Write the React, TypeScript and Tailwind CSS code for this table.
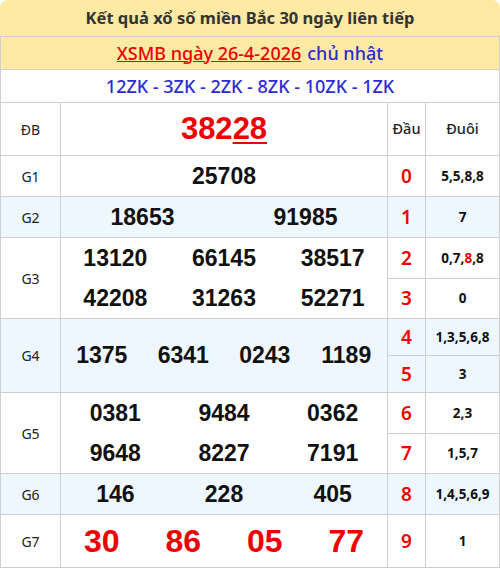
import React from "react";

type Prize = {
  label: string;
  nums: string[][];
  big?: boolean;
  blue?: boolean;
  rows: number;
};

const prizes: Prize[] = [
  { label: "G1", nums: [["25708"]], rows: 1 },
  { label: "G2", nums: [["18653", "91985"]], blue: true, rows: 1 },
  { label: "G3", nums: [["13120", "66145", "38517"], ["42208", "31263", "52271"]], rows: 2 },
  { label: "G4", nums: [["1375", "6341", "0243", "1189"]], blue: true, rows: 2 },
  { label: "G5", nums: [["0381", "9484", "0362"], ["9648", "8227", "7191"]], rows: 2 },
  { label: "G6", nums: [["146", "228", "405"]], blue: true, rows: 1 },
  { label: "G7", nums: [["30", "86", "05", "77"]], big: true, rows: 1 },
];

const duoi: React.ReactNode[] = [
  "5,5,8,8",
  "7",
  <>
    0,7,<span className="text-[#ee0000]">8</span>,8
  </>,
  "0",
  "1,3,5,6,8",
  "3",
  "2,3",
  "1,5,7",
  "1,4,5,6,9",
  "1",
];

const colsClass = ["", "grid-cols-1", "grid-cols-2", "grid-cols-3", "grid-cols-4"];

const cell = "border-r border-b border-[#cfcfcf] flex items-center justify-center";
const round = "font-['Noto_Sans',Lato,sans-serif]";
const arial = "font-['Liberation_Sans',Arial,sans-serif]";

export default function App() {
  let track = 2;
  let dau = 0;
  const cells: React.ReactNode[] = [];

  prizes.forEach((p) => {
    const bg = p.blue ? "bg-[#eef6fe]" : "bg-white";
    const rowStyle = { gridRow: `${track} / span ${p.rows}` };
    cells.push(
      <div key={p.label + "l"} className={`${cell} ${bg} ${round} text-[14px] text-[#222] col-start-1`} style={rowStyle}>
        {p.label}
      </div>
    );
    const cols = p.nums[0].length;
    cells.push(
      <div key={p.label + "n"} className={`border-r border-b border-[#cfcfcf] ${bg} flex flex-col col-start-2`} style={rowStyle}>
        {p.nums.map((line, i) => (
          <div
            key={i}
            className={`flex-1 grid items-center text-center font-bold ${arial} ${colsClass[cols]} ${
              p.big ? "text-[32px] text-[#ee0000]" : "text-[23px] text-[#111]"
            }`}
          >
            {line.map((n) => (
              <span key={n}>{n}</span>
            ))}
          </div>
        ))}
      </div>
    );
    for (let i = 0; i < p.rows; i++) {
      const d = dau;
      cells.push(
        <div
          key={"d" + d}
          className={`${cell} ${bg} ${round} col-start-3 text-[19px] font-semibold text-[#ee0000]`}
          style={{ gridRow: `${track + i}` }}
        >
          {d}
        </div>
      );
      cells.push(
        <div
          key={"t" + d}
          className={`${cell} ${bg} ${round} col-start-4 text-[13.5px] font-bold text-[#111]`}
          style={{ gridRow: `${track + i}` }}
        >
          {duoi[d]}
        </div>
      );
      dau++;
    }
    track += p.rows;
  });

  return (
    <div className={`w-[500px] bg-white ${round}`}>
      {/* Title */}
      <div className="h-[36px] bg-[#feeaa2] rounded-t-lg flex items-center justify-center text-[16.5px] font-bold text-[#333]">
        Kết quả xổ số miền Bắc 30 ngày liên tiếp
      </div>
      <div className="h-[33px] bg-[#feeaa2] border-t border-x border-[#cfcfcf] flex items-center justify-center gap-[6px] text-[18px] font-medium">
        <span className="text-[#ee0000] underline">XSMB ngày 26-4-2026</span>
        <span className="text-[#2b2bd3]">chủ nhật</span>
      </div>
      <div className="h-[33px] bg-white border-t border-x border-[#cfcfcf] flex items-center justify-center text-[18px] font-medium text-[#2b2bd3]">
        12ZK - 3ZK - 2ZK - 8ZK - 10ZK - 1ZK
      </div>

      {/* Results table */}
      <div className="grid border-t border-l border-[#cfcfcf] grid-cols-[60px_327px_38px_74px] grid-rows-[53px_41px_41px_41px_40px_37px_37px_41px_40px_41px_53px]">
        <div className={`${cell} row-start-1 col-start-1 text-[14px] text-[#222]`}>ĐB</div>
        <div className={`${cell} ${arial} row-start-1 col-start-2 text-[31px] font-bold text-[#ee0000]`}>
          382<span className="underline decoration-2 underline-offset-[3px]">28</span>
        </div>
        <div className={`${cell} row-start-1 col-start-3 text-[14.5px] font-medium text-[#222]`}>Đầu</div>
        <div className={`${cell} row-start-1 col-start-4 text-[14.5px] font-medium text-[#222]`}>Đuôi</div>
        {cells}
      </div>
    </div>
  );
}
